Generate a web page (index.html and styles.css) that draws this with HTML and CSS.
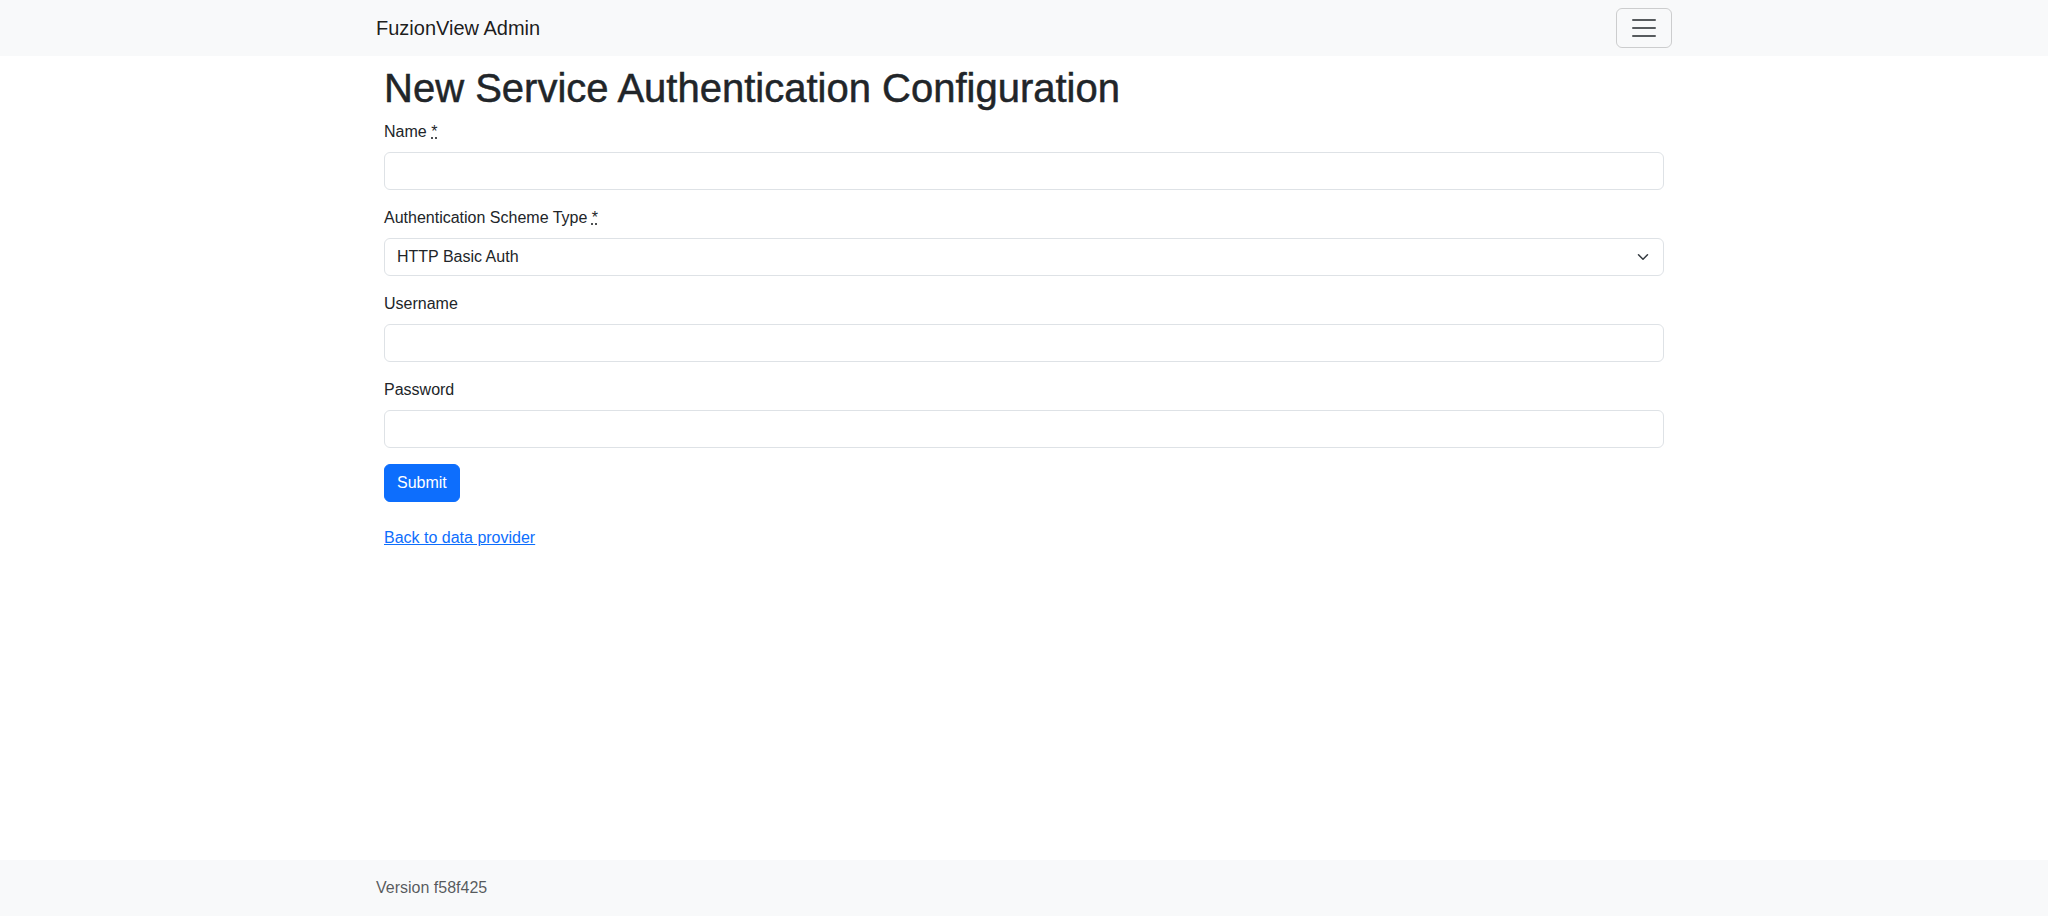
FILE: index.html
```html
<!DOCTYPE html>
<html lang="en">
<head>
<meta charset="utf-8">
<title>FuzionView Admin</title>
<link rel="stylesheet" href="styles.css">
</head>
<body>
<nav class="navbar">
  <div class="container navbar-inner">
    <a class="brand" href="#">FuzionView Admin</a>
    <button class="toggler" type="button" aria-label="Toggle navigation">
      <svg width="30" height="30" viewBox="0 0 30 30" aria-hidden="true"><path d="M4 7h22M4 15h22M4 23h22" stroke="rgba(33,37,41,0.75)" stroke-width="2" stroke-linecap="round" stroke-miterlimit="10"/></svg>
    </button>
  </div>
</nav>
<main class="container main">
  <div class="content">
    <h1 class="title">New Service Authentication Configuration</h1>
    <form class="form">
      <div class="field">
        <label class="label" for="name">Name <abbr title="required">*</abbr></label>
        <input class="control" id="name" type="text">
      </div>
      <div class="field">
        <label class="label" for="scheme">Authentication Scheme Type <abbr title="required">*</abbr></label>
        <div class="select-wrap">
          <select class="control select" id="scheme">
            <option>HTTP Basic Auth</option>
          </select>
          <svg class="chevron" width="16" height="12" viewBox="0 0 16 16" aria-hidden="true"><path d="m2 5 6 6 6-6" fill="none" stroke="#343a40" stroke-width="2" stroke-linecap="round" stroke-linejoin="round"/></svg>
        </div>
      </div>
      <div class="field">
        <label class="label" for="username">Username</label>
        <input class="control" id="username" type="text">
      </div>
      <div class="field">
        <label class="label" for="password">Password</label>
        <input class="control" id="password" type="password">
      </div>
      <button class="btn" type="submit">Submit</button>
    </form>
    <p class="back"><a href="#">Back to data provider</a></p>
  </div>
</main>
<footer class="footer">
  <div class="container">
    <span class="version">Version f58f425</span>
  </div>
</footer>
</body>
</html>
```
FILE: styles.css
```css
* { box-sizing: border-box; }
html, body { margin: 0; padding: 0; }
body {
  font-family: "Liberation Sans", Arial, sans-serif;
  font-size: 16px;
  line-height: 1.5;
  color: #212529;
  background: #fff;
  height: 100vh;
  display: flex;
  flex-direction: column;
  overflow: hidden;
}
.container {
  width: 100%;
  max-width: 1320px;
  margin: 0 auto;
  padding: 0 12px;
}
.navbar {
  background: #f8f9fa;
  padding: 8px 0;
  flex-shrink: 0;
}
.navbar-inner {
  display: flex;
  align-items: center;
  justify-content: space-between;
}
.brand {
  font-size: 20px;
  line-height: 30px;
  padding: 5px 0;
  color: rgba(0,0,0,0.9);
  text-decoration: none;
  margin-right: 16px;
}
.toggler {
  display: flex;
  align-items: center;
  justify-content: center;
  padding: 4px 12px;
  background: transparent;
  border: 1px solid rgba(0,0,0,0.175);
  border-radius: 6px;
  line-height: 1;
}
.toggler svg { display: block; width: 30px; height: 30px; }
.main { flex: 1 1 auto; }
.content { padding: 8px; }
.title {
  margin: 0 0 8px;
  font-size: 40px;
  font-weight: 500;
  line-height: 1.2;
  -webkit-text-stroke: 0.5px #212529;
}
.form { margin: 0; }
.field { margin-bottom: 16px; }
.label {
  display: inline-block;
  margin-bottom: 8px;
}
abbr[title] {
  text-decoration: underline dotted;
  cursor: help;
}
.control {
  display: block;
  width: 100%;
  height: 38px;
  padding: 6px 12px;
  font: inherit;
  font-size: 16px;
  line-height: 1.5;
  color: #212529;
  background: #fff;
  border: 1px solid #dee2e6;
  border-radius: 6px;
  appearance: none;
  -webkit-appearance: none;
}
.select-wrap { position: relative; }
.select { padding-right: 36px; }
.chevron {
  position: absolute;
  right: 13px;
  top: 13px;
  pointer-events: none;
}
.btn {
  display: inline-block;
  padding: 6px 12px;
  font: inherit;
  font-size: 16px;
  line-height: 1.5;
  color: #fff;
  background: #0d6efd;
  border: 1px solid #0d6efd;
  border-radius: 6px;
}
.back { margin: 24px 0 16px; }
.back a { color: #0d6efd; text-decoration: underline; }
.footer {
  background: #f8f9fa;
  padding: 16px 0;
  flex-shrink: 0;
}
.version { color: rgba(33,37,41,0.75); }
```
